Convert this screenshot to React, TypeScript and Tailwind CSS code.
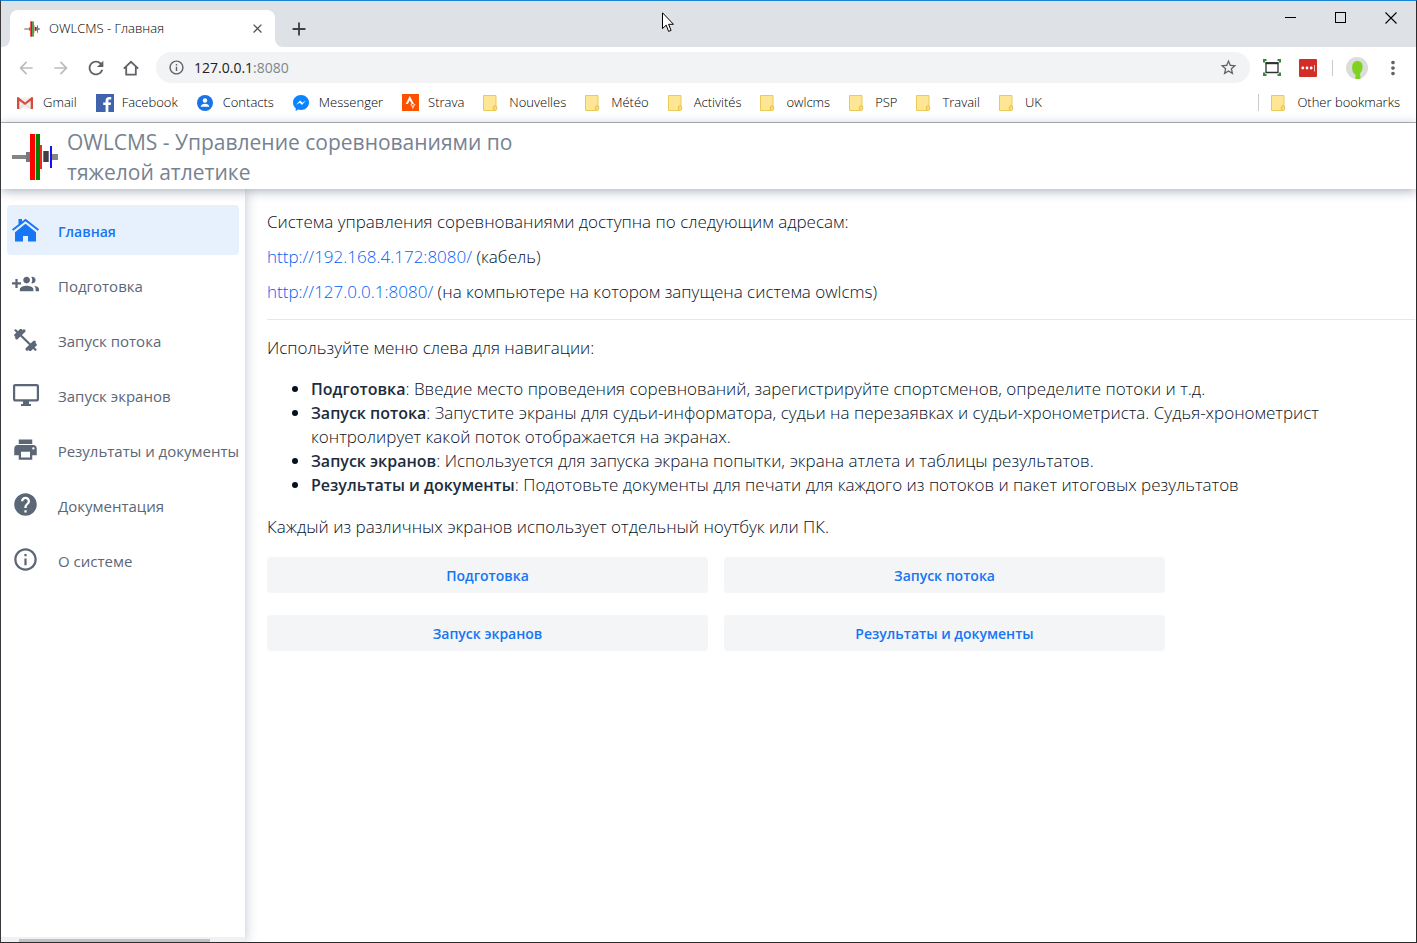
import type { ReactNode } from "react";
import {
  MdArrowBack,
  MdArrowForward,
  MdClose,
  MdAdd,
  MdRefresh,
  MdInfoOutline,
  MdStarBorder,
  MdMoreVert,
  MdPrint,
  MdHelp,
} from "react-icons/md";

function Barbell({ className }: { className: string }) {
  return (
    <svg viewBox="0 0 46 48" className={className} aria-hidden="true">
      <rect x="0" y="22" width="15" height="4" fill="#858585" />
      <rect x="14" y="19" width="4" height="10" fill="#787878" />
      <rect x="18" y="1" width="5" height="46" fill="#f00" />
      <rect x="23" y="1" width="1" height="46" fill="#f3c9b8" />
      <rect x="24" y="1" width="4" height="46" fill="#008000" />
      <rect x="28" y="12" width="2" height="24" fill="#f22" />
      <rect x="31" y="18" width="6" height="11" fill="#777" />
      <rect x="32" y="18" width="4" height="11" fill="#404040" />
      <rect x="38" y="13" width="2" height="22" fill="#11f" />
      <rect x="40" y="21" width="6" height="6" fill="#858585" />
    </svg>
  );
}

function HouseIcon() {
  return (
    <svg viewBox="0 0 27 24" className="h-6 w-[27px]" fill="currentColor" aria-hidden="true">
      <path d="M3 14.2 13.5 5.8 24 14.2V23.5H16V18h-5v5.5H3z" />
      <path d="M6.5 6.2V1H10v2.6L13.5.8 27 11.3l-1.2 1.4L13.5 3.2 1.2 12.7 0 11.3z" />
    </svg>
  );
}

function GroupAddIcon() {
  return (
    <svg viewBox="0 0 24 24" className="h-[27px] w-[27px]" fill="currentColor" aria-hidden="true">
      <path d="M8 10H5V7H3v3H0v2h3v3h2v-3h3v-2zm10 1c1.66 0 2.99-1.34 2.99-3S19.66 5 18 5c-.32 0-.63.05-.91.14.57.81.9 1.79.9 2.86s-.34 2.04-.9 2.86c.28.09.59.14.91.14zm-5 0c1.66 0 2.99-1.34 2.99-3S14.66 5 13 5c-1.66 0-3 1.34-3 3s1.34 3 3 3zm6.62 2.16c.83.73 1.38 1.66 1.38 2.84v2h3v-2c0-1.54-2.37-2.49-4.38-2.84zM13 13c-2 0-6 1-6 3v2h12v-2c0-2-4-3-6-3z" />
    </svg>
  );
}

function DumbbellIcon() {
  return (
    <svg viewBox="0 0 23 22" className="h-[22px] w-[23px]" fill="none" stroke="currentColor" strokeLinecap="round" aria-hidden="true">
      <path d="M1.500 1.300 21.500 20.700" strokeWidth="2.200" />
      <path d="M1.700 6.300 6.900 1.300M16.100 20.700 21.300 15.700" strokeWidth="3" />
      <path d="M2.700 8.900 10 1.900M13 20.100 20.300 13.100" strokeWidth="3" />
    </svg>
  );
}

function DesktopIcon() {
  return (
    <svg viewBox="0 0 26 24" className="h-6 w-[26px]" fill="currentColor" aria-hidden="true">
      <path d="M2.3 1h21.4C24.9 1 26 1.9 26 3.1v13.3c0 1.2-1.1 2.1-2.3 2.1H16V21h2v2H8v-2h2v-2.500H2.300C1.100 18.500 0 17.600 0 16.400V3.100C0 1.900 1.100 1 2.300 1zM2.200 3.200v13.100h21.600V3.200z" />
    </svg>
  );
}

function ChromeHome() {
  return (
    <svg viewBox="0 0 16 16" className="h-4 w-4" fill="none" stroke="currentColor" strokeWidth="1.800" aria-hidden="true">
      <path d="M.8 8.600 8 1.800l7.200 6.800M3.200 7v7.600h9.600V7" />
    </svg>
  );
}

function Folder() {
  return (
    <svg viewBox="0 0 16 16" className="h-4 w-4" aria-hidden="true">
      <path d="M.5.500h12.500v10.300c-1.800-.3-2.700.7-2.700 2.300 0 1 .2 1.700.5 2.400H.5z" fill="#ffe694" stroke="#eacb57" />
      <path d="M10.800 15.500c-.9-2.800.2-4.900 1.700-4.800 1.300.1 1.400 2.100 1.100 3.500-.2.900-.6 1.300-1.300 1.300z" fill="#fbdc78" stroke="#e6c34c" />
    </svg>
  );
}

function GmailIcon() {
  return (
    <svg viewBox="0 0 16 16" className="h-4 w-4" aria-hidden="true">
      <path d="M1 2.500h14v11H1z" fill="#f1efee" />
      <path d="M3 13.500 8 8l5 5.500" fill="none" stroke="#d8d4d2" />
      <path d="M0 3c0-.7.500-1 1.200-1L8 7.500 14.800 2c.7 0 1.200.3 1.200 1v11h-2.300V5.700L8 10 2.300 5.700V14H0z" fill="#d54b3d" />
    </svg>
  );
}

function FacebookIcon() {
  return (
    <svg viewBox="0 0 18 18" className="h-[18px] w-[18px]" aria-hidden="true">
      <path d="M0 0h18v18H0z" fill="#4063ae" />
      <path d="M12.400 18v-6.900h2.300l.4-2.700h-2.700V6.700c0-.8.300-1.300 1.400-1.300h1.400V3c-.3 0-1.100-.1-2.100-.1-2.100 0-3.500 1.200-3.500 3.500v2H7.200v2.700h2.400V18z" fill="#fff" />
    </svg>
  );
}

function ContactsIcon() {
  return (
    <svg viewBox="0 0 16 16" className="h-4 w-4" aria-hidden="true">
      <circle cx="8" cy="8" r="8" fill="#1a73e8" />
      <circle cx="8" cy="5.500" r="2.200" fill="#fff" />
      <path d="M3.700 11.800c0-2 2.200-3 4.300-3s4.300 1 4.300 3z" fill="#fff" />
    </svg>
  );
}

function MessengerIcon() {
  return (
    <svg viewBox="0 0 16 16" className="h-4 w-4" aria-hidden="true">
      <path d="M8 0C3.500 0 0 3.300 0 7.500c0 2.300 1 4.300 2.700 5.700V16l2.500-1.400c.9.300 1.800.4 2.800.4 4.500 0 8-3.300 8-7.500S12.500 0 8 0z" fill="#0a84ff" />
      <path d="m3 9.800 4.200-4.300 2.200 2.200L13 5.500 8.900 9.900 6.800 7.700z" fill="#fff" />
    </svg>
  );
}

function StravaIcon() {
  return (
    <svg viewBox="0 0 17 17" className="h-[17px] w-[17px]" aria-hidden="true">
      <path d="M0 0h17v17H0z" fill="#fc5200" />
      <path d="M7.800 2 12 10H9.700L7.800 6.300 5.900 10H3.600z" fill="#fff" />
      <path d="M8.300 10h1.600l.9 1.800.9-1.800h1.900l-2.800 5.300z" fill="#ffc2a8" />
    </svg>
  );
}

type Bookmark = { label: string; icon: ReactNode };

const bookmarks: Bookmark[] = [
  { label: "Gmail", icon: <GmailIcon /> },
  { label: "Facebook", icon: <FacebookIcon /> },
  { label: "Contacts", icon: <ContactsIcon /> },
  { label: "Messenger", icon: <MessengerIcon /> },
  { label: "Strava", icon: <StravaIcon /> },
  { label: "Nouvelles", icon: <Folder /> },
  { label: "Météo", icon: <Folder /> },
  { label: "Activités", icon: <Folder /> },
  { label: "owlcms", icon: <Folder /> },
  { label: "PSP", icon: <Folder /> },
  { label: "Travail", icon: <Folder /> },
  { label: "UK", icon: <Folder /> },
];

const navItems: { label: string; icon: ReactNode }[] = [
  { label: "Главная", icon: <HouseIcon /> },
  { label: "Подготовка", icon: <GroupAddIcon /> },
  { label: "Запуск потока", icon: <DumbbellIcon /> },
  { label: "Запуск экранов", icon: <DesktopIcon /> },
  { label: "Результаты и документы", icon: <MdPrint size={27} /> },
  { label: "Документация", icon: <MdHelp size={27} /> },
  { label: "О системе", icon: <MdInfoOutline size={27} /> },
];

const steps = [
  ["Подготовка", "Введие место проведения соревнований, зарегистрируйте спортсменов, определите потоки и т.д."],
  [
    "Запуск потока",
    "Запустите экраны для судьи-информатора, судьи на перезаявках и судьи-хронометриста. Судья-хронометрист контролирует какой поток отображается на экранах.",
  ],
  ["Запуск экранов", "Используется для запуска экрана попытки, экрана атлета и таблицы результатов."],
  ["Результаты и документы", "Подотовьте документы для печати для каждого из потоков и пакет итоговых результатов"],
];

function BookmarkLink({ label, icon }: Bookmark) {
  return (
    <a href="#" className="flex items-center">
      <span className="flex w-[26px] shrink-0">{icon}</span>
      {label}
    </a>
  );
}

function TabStrip() {
  return (
    <div className="flex h-[46px] bg-[#dee1e6] pl-px">
      <svg viewBox="0 0 8 8" className="h-2 w-2 self-end" aria-hidden="true">
        <path d="M8 0v8H0a8 8 0 0 0 8-8z" fill="#fff" />
      </svg>
      <div className="mt-[9px] flex w-[265px] items-center rounded-t-lg bg-white pr-2 pl-[14px] text-[13px] font-light text-black">
        <Barbell className="h-4 w-4" />
        <span className="ml-[9px] flex-1">OWLCMS - Главная</span>
        <button aria-label="Close tab" className="flex h-5 w-5 items-center justify-center text-[#50545a]">
          <MdClose size={15} />
        </button>
      </div>
      <svg viewBox="0 0 8 8" className="h-2 w-2 self-end" aria-hidden="true">
        <path d="M0 0v8h8a8 8 0 0 1-8-8z" fill="#fff" />
      </svg>
      <button aria-label="New tab" className="mt-[9px] ml-1 flex h-[37px] w-6 items-center justify-center text-[#3c4043]">
        <MdAdd size={22} />
      </button>
      <div className="ml-auto flex h-[34px] text-black">
        <button aria-label="Minimize" className="flex w-[50px] items-center justify-center">
          <svg viewBox="0 0 12 12" className="h-3 w-3" shapeRendering="crispEdges"><path d="M0 5h11v1H0z" /></svg>
        </button>
        <button aria-label="Maximize" className="flex w-[50px] items-center justify-center">
          <svg viewBox="0 0 12 12" className="h-3 w-3" shapeRendering="crispEdges"><path d="M.5.500h10v10H.5z" fill="none" stroke="#000" /></svg>
        </button>
        <button aria-label="Close" className="flex w-[50px] items-center justify-center">
          <svg viewBox="0 0 12 12" className="h-3 w-3"><path d="m.5.500 11 11m0-11-11 11" stroke="#000" strokeWidth="1.100" /></svg>
        </button>
      </div>
    </div>
  );
}

function Toolbar() {
  const iconButton = "flex h-8 w-[35px] shrink-0 items-center justify-center";
  return (
    <div className="flex h-[41px] items-center bg-white pr-[6px] pl-[7px] text-[#5f6368]">
      <button aria-label="Back" className={`${iconButton} text-[#babcbe]`}><MdArrowBack size={20} /></button>
      <button aria-label="Forward" className={`${iconButton} text-[#babcbe]`}><MdArrowForward size={20} /></button>
      <button aria-label="Reload" className={iconButton}><MdRefresh size={22} /></button>
      <button aria-label="Home" className={iconButton}><ChromeHome /></button>
      <div className="mr-1 ml-2 flex h-[31px] flex-1 items-center rounded-full bg-[#f1f3f4] px-3">
        <MdInfoOutline size={17} />
        <span className="ml-[9px] text-sm text-[#80868b]">
          <span className="text-[#202124]">127.0.0.1</span>:8080
        </span>
        <button aria-label="Bookmark this page" className="ml-auto"><MdStarBorder size={19} /></button>
      </div>
      <button aria-label="Screen capture" className="flex h-8 w-9 items-center justify-center">
        <svg viewBox="0 0 18 17" className="h-[17px] w-[18px]" fill="none">
          <path d="M0 1h3.500M1 0v3.500M14.500 1H18M17 0v3.500M0 16h3.500M1 17v-3.500M14.500 16H18M17 17v-3.500" stroke="#368a3c" strokeWidth="2" />
          <path d="M3 4h12v9.500H3z" stroke="#2e3234" strokeWidth="1.300" />
          <path d="M2.500 4.200h13" stroke="#2e3234" strokeWidth="2" />
        </svg>
      </button>
      <button aria-label="Password manager" className="flex h-8 w-9 items-center justify-center">
        <svg viewBox="0 0 18 18" className="h-[18px] w-[18px]">
          <rect width="18" height="18" rx="1" fill="#d32d27" />
          <g fill="#fff">
            <circle cx="3.800" cy="9" r="1.400" />
            <circle cx="8" cy="9" r="1.400" />
            <circle cx="12.200" cy="9" r="1.400" />
            <path d="M15 6h1v6.500h-1z" fill="#f4b9b5" />
          </g>
        </svg>
      </button>
      <span className="mx-[6px] h-4 w-px bg-[#c8cacd]" />
      <button aria-label="Profile" className="flex h-8 w-9 items-center justify-center">
        <svg viewBox="0 0 22 22" className="h-[22px] w-[22px]">
          <circle cx="11" cy="11" r="11" fill="#dcdcdc" />
          <path d="M11.300 4c3.700 0 5.500 2.700 5.300 6-.1 2.900-1.200 5-2.600 6.400l.6 5c-1.700.6-3.600.7-5.300.3l.2-4.300C6.900 16.500 6 13.500 6.200 10c.1-3.600 2-6 5.100-6z" fill="#7ed321" />
        </svg>
      </button>
      <button aria-label="Menu" className={iconButton}><MdMoreVert size={22} /></button>
    </div>
  );
}

export default function App() {
  return (
    <div className="flex min-h-screen flex-col border border-t-[#1883d7] border-r-[#2b2b2b] border-b-[#2b2b2b] border-l-[#3a3a3a] bg-white font-['Open_Sans','Noto_Sans',sans-serif]">
      <TabStrip />
      <Toolbar />
      <nav aria-label="Bookmarks" className="flex h-[35px] items-center gap-[19px] border-b border-[#b6b6b6] pr-4 pb-[5px] pl-4 text-[13px] font-light text-black">
        {bookmarks.map((b) => (
          <BookmarkLink key={b.label} {...b} />
        ))}
        <div className="ml-auto flex items-center gap-3">
          <span className="h-[17px] w-px bg-[#c8cacd]" />
          <BookmarkLink label="Other bookmarks" icon={<Folder />} />
        </div>
      </nav>

      <header className="relative z-20 flex h-[66px] items-center bg-white pt-[2px] pl-[11px] shadow-[0_2px_10px_rgba(40,60,90,0.4)]">
        <Barbell className="h-12 w-[46px]" />
        <h1 className="ml-[9px] w-[480px] text-[21px] leading-[30px] font-normal text-[#778291]">
          OWLCMS - Управление соревнованиями по тяжелой атлетике
        </h1>
      </header>

      <div className="flex flex-1">
        <aside className="relative z-10 flex w-[244px] shrink-0 flex-col shadow-[0_0_12px_rgba(40,60,90,0.3)]">
          <nav className="flex flex-col gap-[5px] px-[6px] pt-4 text-[#5b6777]">
            {navItems.map(({ label, icon }, i) => (
              <a
                key={label}
                href="#"
                className={
                  i === 0
                    ? "flex h-[50px] items-center rounded bg-[#e7f1fd] pt-[3px] text-sm font-semibold text-[#1676f3]"
                    : "flex h-[50px] items-center rounded pt-[3px] text-[15px]"
                }
              >
                <span className="flex w-[37px] justify-center pb-1">{icon}</span>
                <span className="ml-[14px] whitespace-nowrap">{label}</span>
              </a>
            ))}
          </nav>
          <div className="mt-auto h-[5px] bg-[#f1f1f1] pt-[2px] pl-[18px]">
            <div className="h-[3px] w-[191px] bg-[#c1c1c1]" />
          </div>
        </aside>

        <main className="flex-1 pt-[21px] pr-px pl-[22px] text-[17px] leading-6 font-light text-[#07111f]">
          <p>Система управления соревнованиями доступна по следующим адресам:</p>
          <p className="mt-[11px]">
            <a href="#" className="text-[#0062f0]">http://192.168.4.172:8080/</a> (кабель)
          </p>
          <p className="mt-[11px]">
            <a href="#" className="text-[#0062f0]">http://127.0.0.1:8080/</a> (на компьютере на котором запущена система owlcms)
          </p>
          <hr className="mt-[15px] mb-4 border-[#e6e8eb]" />
          <p>Используйте меню слева для навигации:</p>
          <ul className="mt-[17px] list-disc pl-11">
            {steps.map(([name, text]) => (
              <li key={name}>
                <strong className="text-base leading-6 font-semibold text-[#1d2c40]">{name}</strong>: {text}
              </li>
            ))}
          </ul>
          <p className="mt-[18px]">Каждый из различных экранов использует отдельный ноутбук или ПК.</p>
          <div className="mt-[18px] grid max-w-[898px] grid-cols-2 gap-x-4 gap-y-[22px] text-sm font-semibold text-[#1676f3]">
            {steps.map(([name]) => (
              <button key={name} className="h-9 rounded bg-[#f3f5f7] pt-[2px]">
                {name}
              </button>
            ))}
          </div>
        </main>
      </div>

      <svg viewBox="0 0 12 21" className="pointer-events-none absolute top-3 left-[662px] z-30 h-[21px] w-3" aria-hidden="true">
        <path d="M.5.800v15.800l3.700-3.500 2.400 6.300 2.500-1-2.500-6.100h4.900z" fill="#fff" stroke="#000" />
      </svg>
    </div>
  );
}
